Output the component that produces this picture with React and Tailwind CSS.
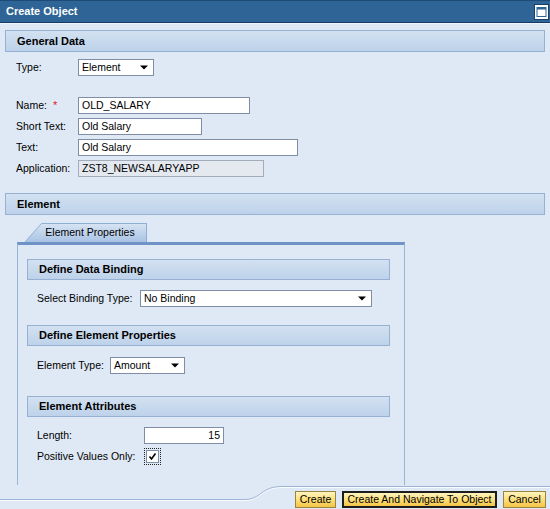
import { useState } from "react";

const font = "font-['Liberation_Sans',Arial,sans-serif]";

function SectionHeader({ title, className = "" }) {
  return (
    <div
      className={`flex h-[21px] items-center border border-[#97b1d3] bg-gradient-to-b from-[#d3e1f1] to-[#bdd2ea] pl-[11px] text-[11px] font-bold text-black ${className}`}
    >
      {title}
    </div>
  );
}

function Arrow() {
  return (
    <svg width="8" height="5" viewBox="0 0 8 5" className="shrink-0">
      <path d="M0 0.5 H8 L4 4.5 Z" fill="#000" />
    </svg>
  );
}

function Select({ value, width }) {
  return (
    <div
      className="flex h-[17px] items-center justify-between border border-[#7f8ea4] bg-white pl-[3px] pr-[5px] text-[10.5px] text-black"
      style={{ width }}
    >
      <span>{value}</span>
      <Arrow />
    </div>
  );
}

function TextInput({ value, width, disabled, right }) {
  return (
    <div
      className={`flex h-[17px] items-center border px-[3px] text-[10.5px] text-black ${
        disabled ? "border-[#a2acba] bg-[#e4e9f0]" : "border-[#7f8ea4] bg-white"
      } ${right ? "justify-end" : ""}`}
      style={{ width }}
    >
      {value}
    </div>
  );
}

function Row({ label, labelWidth, children, className = "", required }) {
  return (
    <div className={`flex items-center ${className}`}>
      <div className="shrink-0 text-[10.5px] text-black" style={{ width: labelWidth }}>
        {label}
        {required ? <span className="ml-[6px] text-[11px] text-[#e0161b]">*</span> : null}
      </div>
      {children}
    </div>
  );
}

function Button({ children, width, primary }) {
  return (
    <button
      className={`flex h-[17px] items-center justify-center bg-gradient-to-b from-[#fff4bd] via-[#fde07a] to-[#f3c444] text-[10.5px] text-black ${
        primary ? "border-2 border-[#1d1d1d]" : "border border-[#9a8440]"
      }`}
      style={{ width }}
    >
      {children}
    </button>
  );
}

export default function App() {
  const [positive, setPositive] = useState(true);

  return (
    <div className={`h-[509px] w-[550px] overflow-hidden bg-[#dfe9f5] ${font}`}>
      <div className="flex h-[23px] items-center justify-between border-t border-b border-t-[#1e4a78] border-b-[#163c63] bg-[#2f6596] pl-[6px] pr-[1px]">
        <span className="text-[11px] font-bold text-white">Create Object</span>
        <svg width="15" height="16" viewBox="0 0 15 16">
          <rect x="0.5" y="0.5" width="14" height="15" fill="#fff" stroke="#1b3f66" />
          <rect x="3" y="3.5" width="9" height="9" fill="#fff" stroke="#2f6596" />
          <rect x="3" y="3" width="9" height="2.5" fill="#2f6596" />
        </svg>
      </div>
      <div className="h-[1px] bg-[#eef4fb]" />

      <div className="px-[5px] pt-[6px]">
        <SectionHeader title="General Data" className="h-[22px]" />

        <div className="pl-[11px]">
          <Row label="Type:" labelWidth={62} className="mt-[7px]">
            <Select value="Element" width={76} />
          </Row>

          <Row label="Name:" labelWidth={62} className="mt-[21px]" required>
            <TextInput value="OLD_SALARY" width={172} />
          </Row>
          <Row label="Short Text:" labelWidth={62} className="mt-[4px]">
            <TextInput value="Old Salary" width={124} />
          </Row>
          <Row label="Text:" labelWidth={62} className="mt-[4px]">
            <TextInput value="Old Salary" width={220} />
          </Row>
          <Row label="Application:" labelWidth={62} className="mt-[4px]">
            <TextInput value="ZST8_NEWSALARYAPP" width={186} disabled />
          </Row>
        </div>

        <SectionHeader title="Element" className="mt-[16px] h-[22px]" />

        <div className="ml-[12px] mt-[8px] w-[388px]">
          <div className="flex h-[19px] items-end">
            <svg width="25" height="19" viewBox="0 0 25 19" className="shrink-0">
              <defs>
                <linearGradient id="tabg" x1="0" y1="0" x2="0" y2="1">
                  <stop offset="0" stopColor="#d6e3f3" />
                  <stop offset="1" stopColor="#a9c3e4" />
                </linearGradient>
              </defs>
              <path d="M8 19 L25 0.5 L25 19 Z" fill="url(#tabg)" />
              <path d="M8 19 L24.5 0.5 H25" stroke="#8faed6" fill="none" />
            </svg>
            <div className="flex h-[19px] w-[105px] items-center justify-center border-t border-r border-[#8faed6] bg-gradient-to-b from-[#d6e3f3] to-[#a9c3e4] pr-[8px] text-[10.5px] text-black">
              Element Properties
            </div>
          </div>

          <div className="border-x border-t-[3px] border-x-[#9bb4d6] border-t-[#6f93c4] pb-[20px] pl-[9px] pr-[14px] pt-[14px]">
            <SectionHeader title="Define Data Binding" />
            <Row label="Select Binding Type:" labelWidth={103} className="mt-[10px] pl-[10px]">
              <Select value="No Binding" width={232} />
            </Row>

            <SectionHeader title="Define Element Properties" className="mt-[18px]" />
            <Row label="Element Type:" labelWidth={73} className="mt-[11px] pl-[10px]">
              <Select value="Amount" width={75} />
            </Row>

            <SectionHeader title="Element Attributes" className="mt-[22px]" />
            <Row label="Length:" labelWidth={107} className="mt-[10px] pl-[10px]">
              <TextInput value="15" width={80} right />
            </Row>
            <Row label="Positive Values Only:" labelWidth={107} className="mt-[4px] pl-[10px]">
              <div
                className="flex h-[17px] w-[17px] cursor-pointer items-center justify-center border border-dotted border-[#222]"
                onClick={() => setPositive(!positive)}
              >
                <div className="flex h-[13px] w-[13px] items-center justify-center border border-[#7f8ea4] bg-white">
                  {positive ? (
                    <svg width="9" height="9" viewBox="0 0 9 9">
                      <path d="M1.5 4.5 L3.5 7 L7.5 1.5" stroke="#000" strokeWidth="1.6" fill="none" />
                    </svg>
                  ) : null}
                </div>
              </div>
            </Row>
          </div>
        </div>
      </div>

      <div className="relative h-[26px] w-[550px]">
        <svg width="550" height="26" viewBox="0 0 550 26" className="absolute inset-0">
          <path d="M0 14.5 H244 C262 14.5 260 1.5 282 1.5 H550" stroke="#fbfdff" fill="none" transform="translate(0 1)" />
          <path d="M0 14.5 H244 C262 14.5 260 1.5 282 1.5 H550" stroke="#9db5d5" fill="none" />
        </svg>
        <div className="relative flex justify-end gap-[6px] pr-[4px] pt-[6px]">
          <Button width={41}>Create</Button>
          <Button width={155} primary>
            Create And Navigate To Object
          </Button>
          <Button width={43}>Cancel</Button>
        </div>
      </div>
    </div>
  );
}
